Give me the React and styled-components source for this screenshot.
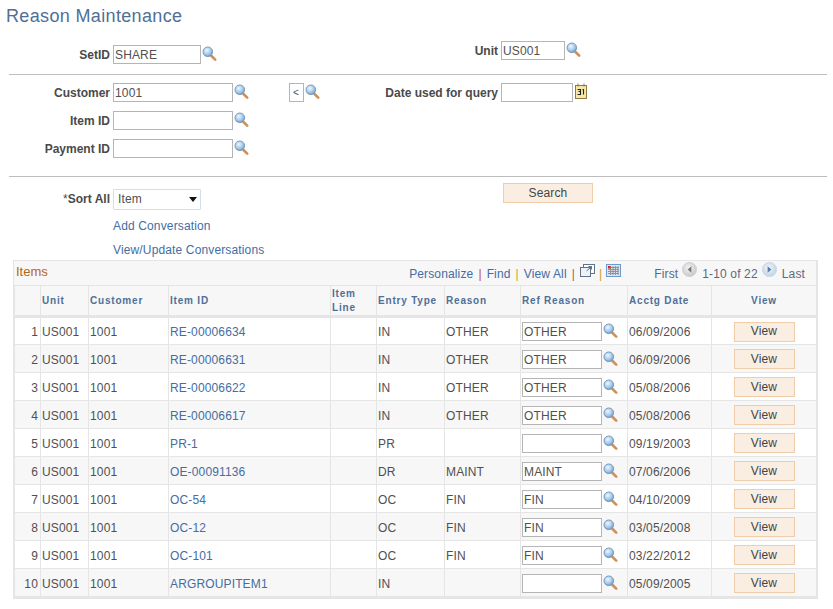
import React from 'react';
import styled, { createGlobalStyle } from 'styled-components';

const GlobalStyle = createGlobalStyle`
  html, body {
    margin: 0;
    padding: 0;
    background: #fff;
    font-family: "Liberation Sans", Arial, sans-serif;
    font-size: 12px;
    letter-spacing: 0.14px;
    color: #505050;
  }
`;

const Page = styled.div`
  width: 833px;
  height: 609px;
  overflow: hidden;
  box-sizing: border-box;
  padding: 7px 0 0 0;
`;

const Title = styled.h1`
  margin: 0 0 0 6px;
  font-size: 18px;
  line-height: 18px;
  font-weight: normal;
  letter-spacing: 0.35px;
  color: #4f6f97;
`;

const TopFields = styled.div`
  display: flex;
  margin-top: 20px;
  height: 29px;
  align-items: flex-start;
`;

const Field = styled.div`
  display: flex;
  align-items: flex-start;
  width: ${p => p.$width || 'auto'};
  grid-column: ${p => p.$column || 'auto'};
  margin-top: ${p => p.$raise ? -p.$raise : 0}px;
`;

const Label = styled.label`
  display: flex;
  justify-content: flex-end;
  width: ${p => p.$width || 110}px;
  margin-right: 3px;
  flex-shrink: 0;
  font-weight: bold;
  letter-spacing: 0;
  color: #4a4a4a;
  line-height: 20px;
  white-space: nowrap;
`;

const SortLabel = styled(Label)`
  margin-top: 6px;
  line-height: 20px;
`;

const Star = styled.span`
  font-weight: normal;
`;

const TextBox = styled.div`
  box-sizing: border-box;
  width: ${p => p.$width}px;
  height: 19px;
  border: 1px solid #b5b5b5;
  background: #fff;
  padding-left: 1px;
  line-height: 18px;
  font-size: 12px;
  color: #505050;
  white-space: nowrap;
  overflow: hidden;
`;

const Rule = styled.hr`
  margin: 0 6px 0 9px;
  border: 0;
  border-top: 1px solid #bdbdbd;
  height: 0;
`;

const CustomerBlock = styled.div`
  display: grid;
  grid-template-columns: 289px 98px auto;
  grid-template-rows: 19px 19px 19px;
  row-gap: 9px;
  padding: 8px 0 18px;
`;

const TinyBox = styled(TextBox)`
  padding-left: 3px;
  font-size: 10px;
`;

const LookupWrap = styled.span`
  display: inline-flex;
  margin-left: ${p => p.$gap ?? 1}px;
  margin-top: ${p => p.$top ?? 1}px;
  flex-shrink: 0;
`;

const SortRow = styled.div`
  display: flex;
  align-items: flex-start;
  height: 37px;
  padding-top: 6px;
  box-sizing: border-box;
`;

const Select = styled.div`
  position: relative;
  box-sizing: border-box;
  width: 88px;
  height: 21px;
  margin-top: 6px;
  border: 1px solid #d5dde6;
  border-radius: 1px;
  padding-left: 4px;
  line-height: 19px;
  color: #505050;

  &::after {
    content: '';
    position: absolute;
    right: 3px;
    top: 7px;
    border-left: 4.5px solid transparent;
    border-right: 4.5px solid transparent;
    border-top: 5px solid #111;
  }
`;

const ActionButton = styled.button`
  display: block;
  box-sizing: border-box;
  width: ${p => p.$width}px;
  height: 20px;
  padding: 0;
  background: #faeee3;
  border: 1px solid #f0cda8;
  color: #444;
  font-family: inherit;
  font-size: 12px;
  letter-spacing: inherit;
  line-height: 16px;
`;

const ViewButton = styled(ActionButton)`
  margin: -1px auto 0;
  padding-bottom: 1px;
`;

const SearchSlot = styled.div`
  margin-left: 302px;
`;

const LinkRow = styled.div`
  padding-left: 113px;
  height: 24px;
  line-height: 24px;
`;

const Link = styled.a`
  color: #436da3;
  text-decoration: none;
`;

const Grid = styled.div`
  width: 805px;
  margin: -2px 0 0 13px;
  border: solid #e5e5e5;
  border-width: 1px 2px 2px 1px;
  box-sizing: border-box;
`;

const GridBar = styled.div`
  display: flex;
  align-items: center;
  height: 24px;
  background: #f7f7f7;
  padding: 0 11px 0 2px;
`;

const GridTitle = styled.div`
  color: #b5651d;
  font-size: 13px;
  letter-spacing: 0;
  margin-top: -3px;
`;

const Tools = styled.div`
  display: flex;
  align-items: center;
  margin-left: auto;
  color: #436da3;
  margin-top: 1px;
`;

const Sep = styled.span`
  color: ${p => p.$gold ? '#c9a227' : '#c0503c'};
  margin: 0 ${p => p.$tight ? 4 : 5}px;
`;

const RaisedIcon = styled.span`
  display: inline-flex;
  margin-top: -7px;
`;

const Pager = styled.div`
  display: flex;
  align-items: center;
  margin-left: 33px;
  margin-top: 1px;
  color: #5a6a7e;
`;

const PagerArrow = styled.span`
  display: inline-flex;
  margin: -8px 5px 0 4px;
`;

const Table = styled.table`
  width: 803px;
  table-layout: fixed;
  border-collapse: collapse;
`;

const Head = styled.th`
  height: 31px;
  padding: 0 1px;
  box-sizing: border-box;
  background: #f7f7f7;
  border: 1px solid #e5e5e5;
  border-bottom: 3px solid #e5e5e5;
  color: #4f6f97;
  font-size: 10px;
  font-weight: bold;
  letter-spacing: 0.8px;
  line-height: 14px;
  text-align: ${p => p.$center ? 'center' : 'left'};
  vertical-align: middle;
`;

const Row = styled.tr`
  background: ${p => p.$shaded ? '#f7f7f7' : '#fff'};
`;

const Cell = styled.td`
  height: 28px;
  padding: 2px ${p => p.$align === 'right' ? 2 : 1}px 0 1px;
  box-sizing: border-box;
  border: 1px solid #e5e5e5;
  color: #505050;
  text-align: ${p => p.$align || 'left'};
  white-space: nowrap;
  vertical-align: middle;
`;

const ReasonField = styled.div`
  display: flex;
  align-items: flex-start;
  margin-top: -1px;
`;

// lookup prompt: blue lens, orange handle
const Lookup = ({ id }) => (
  <svg width="15" height="16" viewBox="0 0 15 16">
    <defs>
      <radialGradient id={id} cx="40%" cy="35%" r="70%">
        <stop offset="0%" stopColor="#eef6fd" />
        <stop offset="60%" stopColor="#a3c9ec" />
        <stop offset="100%" stopColor="#5f93c8" />
      </radialGradient>
    </defs>
    <path d="M9.5 10 L13.2 13.7" stroke="#cf9058" strokeWidth="2.6" strokeLinecap="round" />
    <circle cx="5.8" cy="5.8" r="4.8" fill={`url(#${id})`} stroke="#7d99b5" strokeWidth="1" />
  </svg>
);

const CalendarIcon = () => (
  <svg width="13" height="17" viewBox="0 0 13 17">
    <rect x="0.5" y="2.5" width="11" height="13" fill="#f6e6a8" stroke="#8d7a45" />
    <path d="M3 0.5v3M9 0.5v3" stroke="#8d7a45" />
    <path d="M2.5 6.5h3v2h-2h2v3h-3M7.5 6.5h1v5" fill="none" stroke="#222" strokeWidth="1.1" />
  </svg>
);

const PopupIcon = () => (
  <svg width="15" height="13" viewBox="0 0 15 13">
    <rect x="3.5" y="0.5" width="11" height="9" fill="#fff" stroke="#5f7389" />
    <rect x="0.5" y="3.5" width="10" height="9" fill="#eef2f6" stroke="#5f7389" />
    <path d="M6.5 7 L11.5 2.5 M8.5 2.5 H11.5 V5.5" fill="none" stroke="#5f7389" />
  </svg>
);

const GridIcon = () => (
  <svg width="15" height="13" viewBox="0 0 15 13">
    <rect x="0.5" y="0.5" width="14" height="12" fill="#dfe5ee" stroke="#6b9ad0" />
    <path d="M2 3.5h11M2 5.5h11M2 7.5h11M2 9.5h11M4.5 2v9M7 2v9M9.5 2v9M12 2v9" stroke="#8f9399" strokeWidth="1" />
    <rect x="2" y="2" width="2.5" height="2.5" fill="#e0201c" />
  </svg>
);

const RoundArrow = ({ dir, id, active }) => (
  <svg width="15" height="15" viewBox="0 0 16 16">
    <defs>
      <radialGradient id={id} cx="45%" cy="40%" r="65%">
        <stop offset="0%" stopColor="#f5f5f5" />
        <stop offset="100%" stopColor={active ? '#bcd0e6' : '#c4c4c4'} />
      </radialGradient>
    </defs>
    <circle cx="8" cy="8" r="7.5" fill={`url(#${id})`} stroke={active ? '#c6d6e8' : '#cfcfcf'} />
    <path d={dir === 'left' ? 'M10 4.5 V11.5 L6 8 Z' : 'M6 4.5 V11.5 L10 8 Z'} fill={active ? '#4f7fb8' : '#777'} />
  </svg>
);

const columns = [
  { key: 'n', title: '', width: 26 },
  { key: 'unit', title: 'Unit', width: 48 },
  { key: 'customer', title: 'Customer', width: 80 },
  { key: 'item', title: 'Item ID', width: 162 },
  { key: 'line', title: <>Item<br />Line</>, width: 46 },
  { key: 'type', title: 'Entry Type', width: 68 },
  { key: 'reason', title: 'Reason', width: 76 },
  { key: 'ref', title: 'Ref Reason', width: 107 },
  { key: 'date', title: 'Acctg Date', width: 84 },
  { key: 'view', title: 'View', center: true },
];

const rows = [
  ['RE-00006634', 'IN', 'OTHER', '06/09/2006'],
  ['RE-00006631', 'IN', 'OTHER', '06/09/2006'],
  ['RE-00006622', 'IN', 'OTHER', '05/08/2006'],
  ['RE-00006617', 'IN', 'OTHER', '05/08/2006'],
  ['PR-1', 'PR', '', '09/19/2003'],
  ['OE-00091136', 'DR', 'MAINT', '07/06/2006'],
  ['OC-54', 'OC', 'FIN', '04/10/2009'],
  ['OC-12', 'OC', 'FIN', '03/05/2008'],
  ['OC-101', 'OC', 'FIN', '03/22/2012'],
  ['ARGROUPITEM1', 'IN', '', '05/09/2005'],
];

export default function App() {
  return (
    <Page>
      <GlobalStyle />
      <Title>Reason Maintenance</Title>

      <TopFields>
        <Field $width="387px">
          <Label>SetID</Label>
          <TextBox $width={88}>SHARE</TextBox>
          <LookupWrap><Lookup id="lk-setid" /></LookupWrap>
        </Field>
        <Field $raise={4}>
          <Label $width={111}>Unit</Label>
          <TextBox $width={64}>US001</TextBox>
          <LookupWrap><Lookup id="lk-unit" /></LookupWrap>
        </Field>
      </TopFields>
      <Rule />

      <CustomerBlock>
        <Field>
          <Label>Customer</Label>
          <TextBox $width={120}>1001</TextBox>
          <LookupWrap><Lookup id="lk-cust" /></LookupWrap>
        </Field>
        <Field>
          <TinyBox $width={15}>&lt;</TinyBox>
          <LookupWrap><Lookup id="lk-op" /></LookupWrap>
        </Field>
        <Field>
          <Label $width={111}>Date used for query</Label>
          <TextBox $width={72} />
          <LookupWrap $gap={2} $top={0}><CalendarIcon /></LookupWrap>
        </Field>
        <Field $column={1}>
          <Label>Item ID</Label>
          <TextBox $width={120} />
          <LookupWrap><Lookup id="lk-item" /></LookupWrap>
        </Field>
        <Field $column={1}>
          <Label>Payment ID</Label>
          <TextBox $width={120} />
          <LookupWrap><Lookup id="lk-pay" /></LookupWrap>
        </Field>
      </CustomerBlock>
      <Rule />

      <SortRow>
        <SortLabel><Star>*</Star>Sort All</SortLabel>
        <Select>Item</Select>
        <SearchSlot><ActionButton $width={90}>Search</ActionButton></SearchSlot>
      </SortRow>

      <LinkRow><Link href="#">Add Conversation</Link></LinkRow>
      <LinkRow><Link href="#">View/Update Conversations</Link></LinkRow>

      <Grid>
        <GridBar>
          <GridTitle>Items</GridTitle>
          <Tools>
            <Link href="#">Personalize</Link>
            <Sep>|</Sep>
            <Link href="#">Find</Link>
            <Sep $gold>|</Sep>
            <Link href="#">View All</Link>
            <Sep>|</Sep>
            <RaisedIcon><PopupIcon /></RaisedIcon>
            <Sep $gold $tight>|</Sep>
            <RaisedIcon><GridIcon /></RaisedIcon>
          </Tools>
          <Pager>
            <span>First</span>
            <PagerArrow><RoundArrow dir="left" id="pg-prev" /></PagerArrow>
            <span>1-10 of 22</span>
            <PagerArrow><RoundArrow dir="right" id="pg-next" active /></PagerArrow>
            <span>Last</span>
          </Pager>
        </GridBar>
        <Table>
          <colgroup>
            {columns.map(c => <col key={c.key} style={c.width ? { width: c.width } : undefined} />)}
          </colgroup>
          <thead>
            <tr>
              {columns.map(c => <Head key={c.key} $center={c.center}>{c.title}</Head>)}
            </tr>
          </thead>
          <tbody>
            {rows.map(([item, type, reason, date], i) => (
              <Row key={item} $shaded={i % 2 === 1}>
                <Cell $align="right">{i + 1}</Cell>
                <Cell>US001</Cell>
                <Cell>1001</Cell>
                <Cell><Link href="#">{item}</Link></Cell>
                <Cell />
                <Cell>{type}</Cell>
                <Cell>{reason}</Cell>
                <Cell>
                  <ReasonField>
                    <TextBox $width={80}>{reason}</TextBox>
                    <LookupWrap><Lookup id={`lk-r${i}`} /></LookupWrap>
                  </ReasonField>
                </Cell>
                <Cell>{date}</Cell>
                <Cell $align="center"><ViewButton $width={61}>View</ViewButton></Cell>
              </Row>
            ))}
          </tbody>
        </Table>
      </Grid>
    </Page>
  );
}
